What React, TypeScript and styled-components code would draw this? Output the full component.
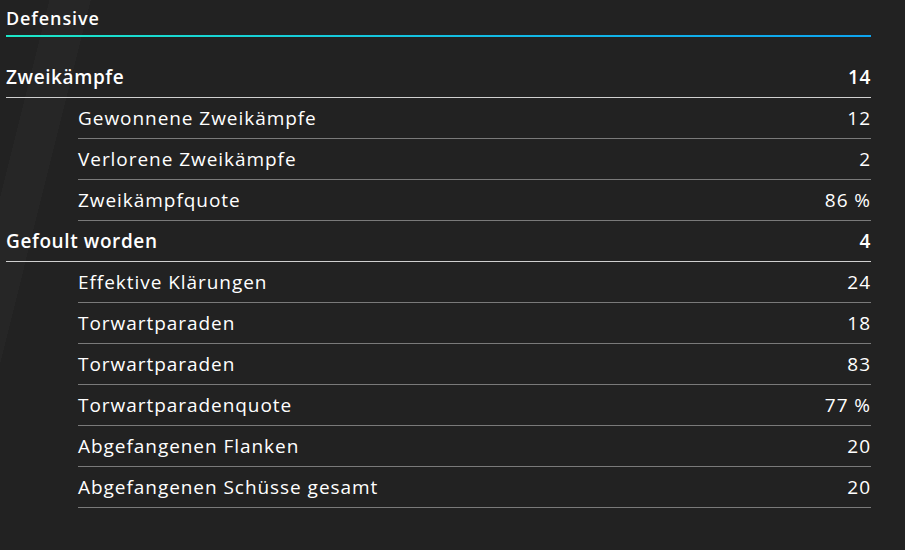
import styled, { createGlobalStyle } from 'styled-components';

type Stat = { label: string; value: string };
type Group = { title: string; value: string; items: Stat[] };

const groups: Group[] = [
  {
    title: 'Zweikämpfe',
    value: '14',
    items: [
      { label: 'Gewonnene Zweikämpfe', value: '12' },
      { label: 'Verlorene Zweikämpfe', value: '2' },
      { label: 'Zweikämpfquote', value: '86 %' },
    ],
  },
  {
    title: 'Gefoult worden',
    value: '4',
    items: [
      { label: 'Effektive Klärungen', value: '24' },
      { label: 'Torwartparaden', value: '18' },
      { label: 'Torwartparaden', value: '83' },
      { label: 'Torwartparadenquote', value: '77 %' },
      { label: 'Abgefangenen Flanken', value: '20' },
      { label: 'Abgefangenen Schüsse gesamt', value: '20' },
    ],
  },
];

const GlobalStyle = createGlobalStyle`
  html, body {
    margin: 0;
    padding: 0;
    background: #222222;
  }
  body {
    font-family: "Open Sans", "Noto Sans", sans-serif;
    color: #ffffff;
  }
`;

const Page = styled.div`
  width: 905px;
  height: 550px;
  box-sizing: border-box;
  padding: 0 34px 0 6px;
  background:
    linear-gradient(104deg, transparent 0 48px, rgba(255,255,255,0.018) 48px 88px, transparent 88px),
    #222222;
`;

const Heading = styled.div`
  height: 35px;
  display: flex;
  align-items: center;
  font-size: 18px;
  font-weight: 600;
  letter-spacing: 0.9px;
`;

const Underline = styled.div`
  height: 2px;
  background: linear-gradient(90deg, #1ce8c8 0%, #12b8e6 60%, #0ea4ef 100%);
  margin-bottom: 20px;
`;

const Row = styled.div<{ $sub?: boolean }>`
  height: 40px;
  display: flex;
  align-items: center;
  justify-content: space-between;
  margin-left: ${(p) => (p.$sub ? '72px' : '0')};
  border-bottom: 1px solid ${(p) => (p.$sub ? '#7a7a7a' : '#d0d0d0')};
  font-size: 19px;
  font-weight: ${(p) => (p.$sub ? 400 : 600)};
  letter-spacing: ${(p) => (p.$sub ? '0.95px' : '0.6px')};
`;

const Value = styled.span`
  font-variant-numeric: tabular-nums;
`;

export default function App() {
  return (
    <>
      <GlobalStyle />
      <Page>
        <Heading>Defensive</Heading>
        <Underline />
        {groups.map((g) => (
          <div key={g.title}>
            <Row>
              <span>{g.title}</span>
              <Value>{g.value}</Value>
            </Row>
            {g.items.map((s, i) => (
              <Row $sub key={i}>
                <span>{s.label}</span>
                <Value>{s.value}</Value>
              </Row>
            ))}
          </div>
        ))}
      </Page>
    </>
  );
}
